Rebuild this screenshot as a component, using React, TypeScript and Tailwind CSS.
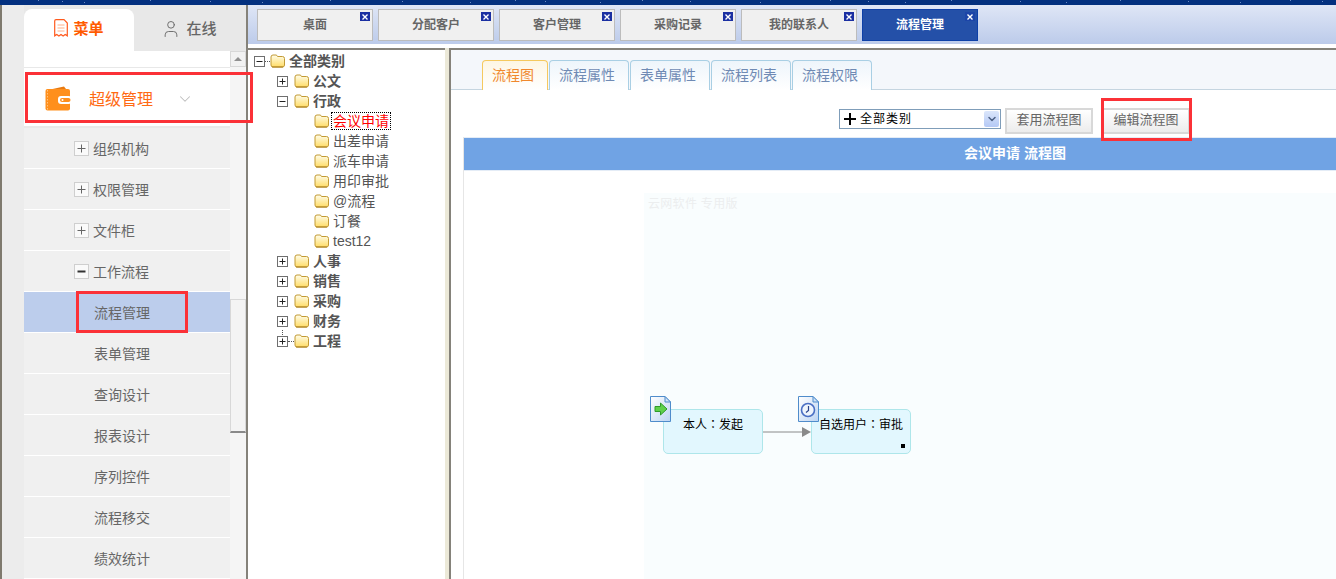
import { User, ChevronDown } from "lucide-react";

const FONT = "font-['Liberation_Sans','Noto_Sans_CJK_SC',sans-serif]";

const TOP_TABS = ["桌面", "分配客户", "客户管理", "采购记录", "我的联系人", "流程管理"];
const PANEL_TABS = ["流程图", "流程属性", "表单属性", "流程列表", "流程权限"];
const MENU_GROUPS = [
    { label: "组织机构", icon: "plus" },
    { label: "权限管理", icon: "plus" },
    { label: "文件柜", icon: "plus" },
    { label: "工作流程", icon: "minus" },
];
const MENU_ITEMS = ["流程管理", "表单管理", "查询设计", "报表设计", "序列控件", "流程移交", "绩效统计"];

const TREE = [
    { label: "全部类别", level: 0, box: "minus", bold: true },
    { label: "公文", level: 1, box: "plus", bold: true },
    { label: "行政", level: 1, box: "minus", bold: true },
    { label: "会议申请", level: 2, selected: true },
    { label: "出差申请", level: 2 },
    { label: "派车申请", level: 2 },
    { label: "用印审批", level: 2 },
    { label: "@流程", level: 2 },
    { label: "订餐", level: 2 },
    { label: "test12", level: 2 },
    { label: "人事", level: 1, box: "plus", bold: true },
    { label: "销售", level: 1, box: "plus", bold: true },
    { label: "采购", level: 1, box: "plus", bold: true },
    { label: "财务", level: 1, box: "plus", bold: true },
    { label: "工程", level: 1, box: "plus", bold: true, last: true },
];

// little stars on the header picture
const SPECKS = [38, 62, 84, 150, 210, 262, 330, 402, 470, 515, 545, 600, 642, 690, 760, 830, 868, 905, 951, 1020, 1066, 1120, 1188, 1240, 1290, 1322];

const Folder = () => (
    <svg width="15" height="14" viewBox="0 0 15 14" className="shrink-0">
        <defs>
            <linearGradient id="folderFill" x1="0" y1="0" x2="0" y2="1">
                <stop offset="0" stopColor="#fffdea" />
                <stop offset="1" stopColor="#ffdc66" />
            </linearGradient>
        </defs>
        <path
            d="M1 3 Q1 1 3 1 H6 Q7 1 7.5 2.5 H12.5 Q14.5 2.5 14.5 4.5 V11 Q14.5 13 12.5 13 H3 Q1 13 1 11 Z"
            fill="url(#folderFill)"
            stroke="#c29a34"
        />
        <path d="M2 13 H13" stroke="#a87c1c" />
    </svg>
);

const TreeBox = ({ type }: { type: string }) => (
    <svg width="11" height="11" viewBox="0 0 11 11" className="shrink-0">
        <rect x="0.5" y="0.5" width="10" height="10" fill="#fff" stroke="#6f6f6f" />
        <path d={type === "plus" ? "M2.5 5.5 H8.5 M5.5 2.5 V8.5" : "M2.5 5.5 H8.5"} stroke="#222" />
    </svg>
);

const MenuBox = ({ type }: { type: string }) => (
    <svg width="15" height="15" viewBox="0 0 15 15" className="shrink-0">
        <rect x="0.5" y="0.5" width="14" height="14" fill="#fafafa" stroke="#cfcfcf" />
        {type === "plus" ? (
            <path d="M3.5 7.5 H11.5 M7.5 3.5 V11.5" stroke="#666" />
        ) : (
            <path d="M3.5 7.5 H11.5" stroke="#333" strokeWidth="2" />
        )}
    </svg>
);

const Wallet = () => (
    <svg width="27" height="25" viewBox="0 0 27 25" className="shrink-0">
        <path d="M3 4 L19 0.5 L21 3 Z" fill="#e87a10" />
        <rect x="0.5" y="3" width="24.5" height="21.5" rx="2" fill="#ff8f1c" />
        <path d="M2.5 4 V24" stroke="#ffc27e" strokeDasharray="1.5 1.5" />
        <rect x="13" y="10" width="13.5" height="8" rx="3" fill="#fff" />
        <rect x="15" y="12" width="10.5" height="4" rx="2" fill="#ff8f1c" />
        <circle cx="17.5" cy="14" r="1" fill="#fff" />
    </svg>
);

const MenuDoc = () => (
    <svg width="14" height="18" viewBox="0 0 14 18" fill="none" className="shrink-0">
        <path
            d="M2 0.7 H10 L13.3 4 V16.8 L11.2 15.4 L9.1 17 L7 15.4 L4.9 17 L2.8 15.4 L0.7 16.8 V2 Q0.7 0.7 2 0.7 Z"
            stroke="#ff5a1e"
            strokeWidth="1.2"
        />
        <path d="M3.5 6 H10.5 M3.5 9 H10.5 M3.5 12 H10.5" stroke="#ffb08a" />
    </svg>
);

const CloseBadge = ({ active }: { active: boolean }) => (
    <span className={`absolute top-[2px] right-[2px] flex h-[9px] w-[10px] items-center justify-center ${active ? "bg-[#1c45a8]" : "bg-[#1a2fa2]"}`}>
        <svg width="6" height="6" viewBox="0 0 6 6">
            <path d="M0.5 0.5 L5.5 5.5 M5.5 0.5 L0.5 5.5" stroke="#fff" strokeWidth="1.4" />
        </svg>
    </span>
);

const StartIcon = () => (
    <svg width="21" height="26" viewBox="0 0 21 26">
        <defs>
            <linearGradient id="docFill" x1="0" y1="0" x2="1" y2="1">
                <stop offset="0" stopColor="#ffffff" />
                <stop offset="1" stopColor="#bcd4f2" />
            </linearGradient>
        </defs>
        <path d="M0.5 0.5 H15 L20.5 6 V25.5 H0.5 Z" fill="url(#docFill)" stroke="#4f8ccb" />
        <path d="M15 0.5 V6 H20.5 Z" fill="#cfe2f7" stroke="#4f8ccb" />
        <path d="M5 10.5 H10.5 V7 L17 13 L10.5 19 V15.5 H5 Z" fill="#5fd04a" stroke="#2f9a2a" />
    </svg>
);

const ClockIcon = () => (
    <svg width="21" height="26" viewBox="0 0 21 26">
        <path d="M0.5 0.5 H15 L20.5 6 V25.5 H0.5 Z" fill="url(#docFill)" stroke="#4f8ccb" />
        <path d="M15 0.5 V6 H20.5 Z" fill="#cfe2f7" stroke="#4f8ccb" />
        <circle cx="10" cy="14" r="6.5" fill="#eef4fc" stroke="#4a6fc4" strokeWidth="1.6" />
        <path d="M10.5 10 V14.5 L8 16.5" fill="none" stroke="#28438c" strokeWidth="1.2" />
    </svg>
);

const FlowNode = ({ label, className }: { label: string; className: string }) => (
    <div className={`absolute top-[238px] flex h-[45px] w-[100px] justify-center rounded-[5px] border border-[#aee6ea] bg-[#e2f7fe] pt-[7px] font-['Liberation_Sans','Noto_Sans_CJK_TC',sans-serif] text-[12px] leading-[17px] text-black ${className}`}>
        {label}
    </div>
);

const RedBox = ({ className }: { className: string }) => (
    <div className={`pointer-events-none absolute border-[3px] border-[#fb3137] ${className}`} />
);

const Sidebar = () => (
    <aside className="flex w-[248px] shrink-0 border-l-2 border-r-2 border-l-[#7f7a6e] border-r-[#85827a] bg-[#ececec] pl-[22px]">
        <div className="flex w-[222px] flex-col">
            <div className="flex h-[46px] shrink-0 items-end bg-[#e8e8e8]">
                <div className="flex h-[42px] w-[110px] items-start justify-center gap-[5px] rounded-t-[8px] bg-white pt-[10px] text-[15px] font-bold leading-[20px] text-[#ff5a00]">
                    <MenuDoc />
                    <span>菜单</span>
                </div>
                <div className="flex h-[42px] flex-1 items-start justify-center gap-[5px] pr-[2px] pt-[10px] text-[15px] font-medium leading-[20px] text-[#666]">
                    <User size={20} strokeWidth={1.1} className="text-[#666]" />
                    <span>在线</span>
                </div>
            </div>
            <div className="flex min-h-0 flex-1">
                <div className="flex w-[206px] flex-col overflow-hidden bg-[#f0f0f0]">
                    <div className="h-[17px] shrink-0 border-b border-[#e8e8e8] bg-white" />
                    <div className="flex h-[60px] shrink-0 items-center border-b-2 border-[#e9e9e9] bg-white pl-[21px] pt-[3px]">
                        <Wallet />
                        <span className="ml-[17px] mt-[2px] text-[16px] leading-[20px] text-[#ff6a13]">超级管理</span>
                        <ChevronDown size={18} strokeWidth={1.4} className="ml-[23px] text-[#bdbdbd]" />
                    </div>
                    {MENU_GROUPS.map(g => (
                        <div key={g.label} className="flex h-[41px] shrink-0 items-center gap-[4px] border-b border-white pl-[50px] text-[14px] text-[#666]">
                            <MenuBox type={g.icon} />
                            <span className="mt-[2px]">{g.label}</span>
                        </div>
                    ))}
                    {MENU_ITEMS.map((item, i) => (
                        <div
                            key={item}
                            className={`flex h-[41px] shrink-0 items-center border-b border-white pl-[70px] pt-[2px] text-[14px] text-[#666] ${i === 0 ? "bg-[#bccdec]" : ""}`}
                        >
                            {item}
                        </div>
                    ))}
                </div>
                <div className="flex w-[16px] flex-col bg-[#f5f5f5]">
                    <div className="flex h-[16px] shrink-0 items-center justify-center border border-[#d8d8d8] bg-[#f2f2f2]">
                        <div className="h-0 w-0 border-x-[4px] border-b-[4px] border-x-transparent border-b-[#909090]" />
                    </div>
                    <div className="mt-[232px] h-[134px] shrink-0 border-x border-t border-b-2 border-x-[#d8d8d8] border-t-[#d8d8d8] border-b-[#8a8a8a] bg-[#f4f4f4]" />
                </div>
            </div>
        </div>
    </aside>
);

const CategoryTree = () => (
    <div className="flex w-[197px] shrink-0 flex-col border-t-2 border-[#85827a] bg-white pt-[1px] text-[14px] leading-[20px] text-[#555]">
        {TREE.map(node => (
            <div
                key={node.label}
                className={`relative flex h-5 shrink-0 items-center ${node.level === 0 ? "pl-[6px]" : node.level === 1 ? "pl-[29px]" : "pl-[66px]"}`}
            >
                {node.box && <TreeBox type={node.box} />}
                {node.box && (
                    <span
                        className={`h-0 shrink-0 ${node.level === 0 ? "w-[5px]" : "w-[6px]"} ${node.level === 0 || node.last ? "border-t border-dotted border-[#555]" : ""}`}
                    />
                )}
                {node.last && <span className="absolute left-[34px] top-[-1px] h-[5px] w-0 border-l border-dotted border-[#555]" />}
                <Folder />
                <span
                    className={`ml-[2px] whitespace-nowrap px-[1px] ${node.bold ? "font-bold" : ""} ${node.selected ? "border border-dotted border-black leading-[16px] text-[#ff0000]" : "border border-transparent"}`}
                >
                    {node.label}
                </span>
            </div>
        ))}
    </div>
);

const FlowPanel = () => (
    <main className="relative flex min-w-0 flex-1 flex-col border-l-2 border-t-2 border-[#85827a] bg-white">
        <div className="flex h-[40px] shrink-0 items-end gap-[1px] border-b border-[#c5d5e0] bg-[#f4f7fb] pl-[31px]">
            {PANEL_TABS.map((tab, i) => (
                <div
                    key={tab}
                    className={`-mb-[1px] flex h-[30px] items-center rounded-t-[4px] border border-b-0 bg-gradient-to-b pl-[9px] text-[14px] ${
                        i === 0
                            ? "w-[66px] border-[#f5c95e] from-[#fdf6e4] to-white text-[#f0882d]"
                            : "w-[80px] border-[#a9cfe4] from-[#eef5fb] to-white text-[#6f8ab4]"
                    }`}
                >
                    {tab}
                </div>
            ))}
        </div>
        <div className="flex h-[47px] shrink-0 items-start pl-[388px] pt-[18px]">
            <div className="mt-px flex h-[20px] w-[162px] items-center border border-[#7f9db9] bg-white pl-[4px] pr-[1px] text-[12px] tracking-[1px] text-black">
                <svg width="12" height="12" viewBox="0 0 12 12" className="mr-[4px] shrink-0">
                    <path d="M0 6 H12 M6 0 V12" stroke="#000" strokeWidth="2" />
                </svg>
                <span className="flex-1">全部类别</span>
                <span className="flex h-[16px] w-[15px] items-center justify-center rounded-[2px] bg-gradient-to-b from-[#dbe6fb] to-[#b5c9f5]">
                    <ChevronDown size={12} strokeWidth={3} className="text-[#4d6185]" />
                </span>
            </div>
            <button className="ml-[4px] h-[26px] w-[88px] border-2 border-[#d8d8d8] bg-gradient-to-b from-white to-[#ececec] pb-[2px] text-[13px] text-[#666]">
                套用流程图
            </button>
            <button className="ml-[9px] h-[26px] w-[88px] border-2 border-[#d8d8d8] bg-gradient-to-b from-white to-[#ececec] pb-[2px] text-[13px] text-[#666]">
                编辑流程图
            </button>
        </div>
        <RedBox className="left-[650px] top-[48px] h-[43px] w-[91px]" />
        <div className="ml-[12px] flex min-h-0 flex-1 flex-col border-l border-[#e6e6e6]">
            <div className="flex h-[34px] shrink-0 items-center justify-center border-y border-[#e4ecf6] bg-[#70a3e4] pb-[1px] pl-[230px] text-[14px] font-bold text-white">
                会议申请 流程图
            </div>
            <div className="relative flex-1 overflow-hidden pl-[180px] pt-[22px]">
                <div className="h-full bg-[#f9fdfe] pl-[4px] pt-[3px] text-[12px] leading-[17px] tracking-[0.3px] text-[#eceeef]">云网软件 专用版</div>
                <FlowNode label="本人：发起" className="left-[199px]" />
                <FlowNode label="自选用户：审批" className="left-[347px]" />
                <div className="absolute left-[186px] top-[225px]"><StartIcon /></div>
                <div className="absolute left-[334px] top-[225px]"><ClockIcon /></div>
                <svg className="absolute left-[299px] top-[255px]" width="48" height="12" viewBox="0 0 48 12">
                    <path d="M0 6 H40" stroke="#8a8a8a" />
                    <path d="M39 1 L48 6 L39 11 Z" fill="#8a8a8a" />
                </svg>
                <div className="absolute left-[437px] top-[273px] h-[4px] w-[4px] bg-black" />
            </div>
        </div>
    </main>
);

export default function App() {
    return (
        <div className={`relative flex h-[579px] w-[1336px] flex-col overflow-hidden bg-white ${FONT}`}>
            <svg className="block shrink-0" width="1336" height="5" viewBox="0 0 1336 5">
                <rect width="1336" height="5" fill="#03307f" />
                {SPECKS.map((x, i) => (
                    <rect key={x} x={x} y={i % 3} width="1" height="1" fill="#6d8cc4" />
                ))}
            </svg>
            <div className="flex min-h-0 flex-1">
                <Sidebar />
                <div className="flex min-w-0 flex-1 flex-col">
                    <div className="flex h-[39px] shrink-0 items-start gap-[5px] bg-gradient-to-b from-[#dfe6f6] to-[#bccbea] pl-[9px] pt-[4px]">
                        {TOP_TABS.map((tab, i) => {
                            const active = i === TOP_TABS.length - 1;
                            return (
                                <div
                                    key={tab}
                                    className={`relative flex h-[32px] w-[116px] items-center justify-center text-[12px] font-bold ${
                                        active
                                            ? "border border-[#0d40a8] bg-[#2450a8] text-white"
                                            : "border border-[#bcbcbc] bg-[#f0f0f0] text-[#666]"
                                    }`}
                                >
                                    {tab}
                                    <CloseBadge active={active} />
                                </div>
                            );
                        })}
                    </div>
                    <div className="h-[4px] shrink-0 bg-white" />
                    <div className="flex min-h-0 flex-1">
                        <CategoryTree />
                        <div className="w-[4px] shrink-0 bg-[#ece9d8]" />
                        <FlowPanel />
                    </div>
                </div>
            </div>
            <RedBox className="left-[25px] top-[72px] h-[51px] w-[228px]" />
            <RedBox className="left-[76px] top-[291px] h-[42px] w-[112px]" />
        </div>
    );
}
